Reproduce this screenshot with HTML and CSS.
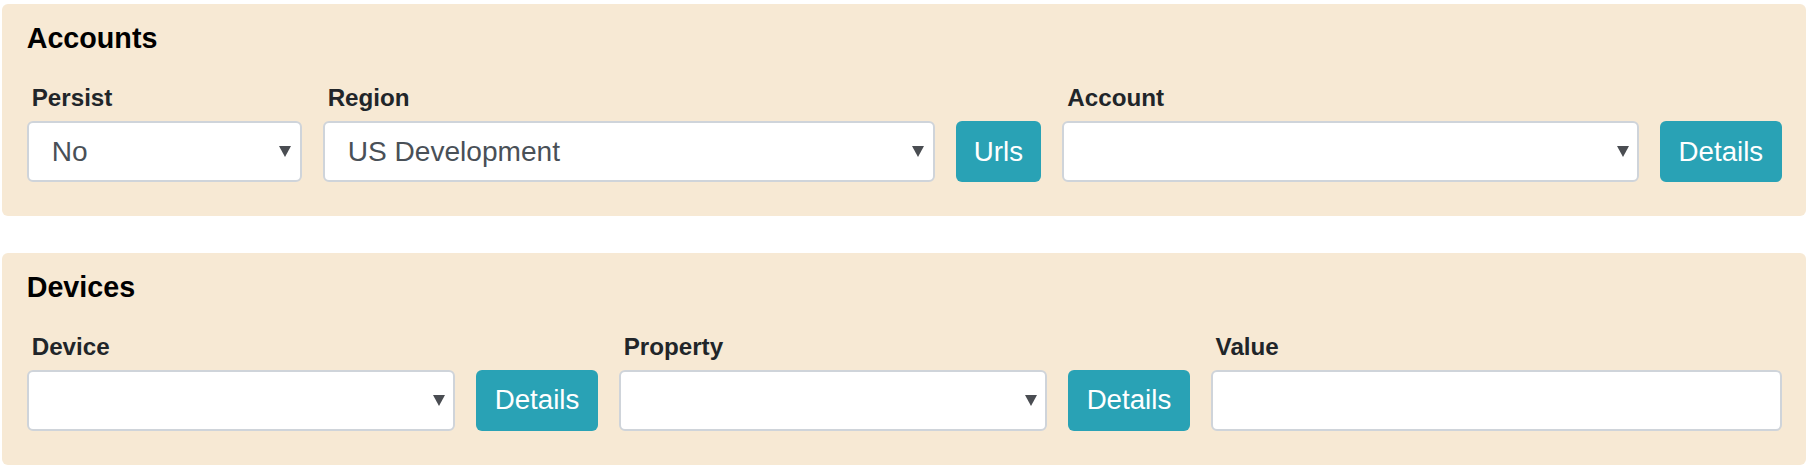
FILE: index.html
```html
<!DOCTYPE html>
<html lang="en">
<head>
<meta charset="utf-8">
<title>Accounts and Devices</title>
<link rel="stylesheet" href="styles.css">
</head>
<body>
<div class="page">
  <section class="panel">
    <h2 class="panel-title">Accounts</h2>
    <div class="row row-accounts">
      <div class="field">
        <label class="field-label" for="persist">Persist</label>
        <div class="select-wrap">
          <select id="persist" class="control">
            <option>No</option>
            <option>Yes</option>
          </select>
        </div>
      </div>
      <div class="field">
        <label class="field-label" for="region">Region</label>
        <div class="select-wrap">
          <select id="region" class="control">
            <option>US Development</option>
          </select>
        </div>
      </div>
      <button class="btn" type="button">Urls</button>
      <div class="field">
        <label class="field-label" for="account">Account</label>
        <div class="select-wrap">
          <select id="account" class="control">
            <option></option>
          </select>
        </div>
      </div>
      <button class="btn" type="button">Details</button>
    </div>
  </section>

  <section class="panel">
    <h2 class="panel-title">Devices</h2>
    <div class="row row-devices">
      <div class="field">
        <label class="field-label" for="device">Device</label>
        <div class="select-wrap">
          <select id="device" class="control">
            <option></option>
          </select>
        </div>
      </div>
      <button class="btn" type="button">Details</button>
      <div class="field">
        <label class="field-label" for="property">Property</label>
        <div class="select-wrap">
          <select id="property" class="control">
            <option></option>
          </select>
        </div>
      </div>
      <button class="btn" type="button">Details</button>
      <div class="field">
        <label class="field-label" for="value">Value</label>
        <input id="value" class="control" type="text">
      </div>
    </div>
  </section>
</div>
</body>
</html>
```

FILE: styles.css
```css
* {
  box-sizing: border-box;
}

html, body {
  margin: 0;
  padding: 0;
  background: #ffffff;
}

body {
  font-family: "Liberation Sans", Arial, sans-serif;
  color: #212529;
}

.page {
  display: flex;
  flex-direction: column;
  gap: 36.6px;
  padding: 4px 2px 0 2px;
}

.panel {
  background: #f7e9d4;
  border-radius: 6px;
  padding: 17px 24.5px 34px 24.7px;
}

.panel-title {
  margin: 0 0 29.4px 0;
  font-size: 28.7px;
  line-height: 34px;
  font-weight: bold;
  color: #000000;
}

.row {
  display: grid;
  column-gap: 21px;
  align-items: end;
}

.row-accounts {
  grid-template-columns: 275fr 612fr auto 577fr auto;
}

.row-devices {
  grid-template-columns: 428fr auto 428fr auto 570fr;
}

.field {
  display: flex;
  flex-direction: column;
  min-width: 0;
}

.field-label {
  display: block;
  font-size: 24.2px;
  line-height: 28px;
  font-weight: bold;
  color: #212529;
  padding-left: 5px;
  margin-bottom: 8.8px;
}

.select-wrap {
  position: relative;
}

.select-wrap::after {
  content: "";
  position: absolute;
  right: 10.4px;
  top: 50%;
  margin-top: -5.5px;
  width: 0;
  height: 0;
  border-left: 6px solid transparent;
  border-right: 6px solid transparent;
  border-top: 11px solid #4a4d52;
  pointer-events: none;
}

.control {
  display: block;
  width: 100%;
  height: 61px;
  margin: 0;
  padding: 0 36px 0 23px;
  font-family: "Liberation Sans", Arial, sans-serif;
  font-size: 28.1px;
  color: #495057;
  background: #ffffff;
  border: 2px solid #cfd4da;
  border-radius: 6px;
  -webkit-appearance: none;
  -moz-appearance: none;
  appearance: none;
  outline: none;
}

.btn {
  height: 61px;
  margin: 0;
  padding: 0 18.3px;
  font-family: "Liberation Sans", Arial, sans-serif;
  font-size: 27.7px;
  color: #ffffff;
  background: #29a2b5;
  border: none;
  border-radius: 6px;
  cursor: pointer;
}
```
